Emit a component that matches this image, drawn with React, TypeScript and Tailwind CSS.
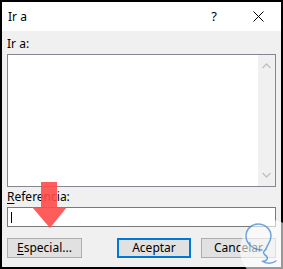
import React from "react";

const font = { fontFamily: '"Segoe UI", "Noto Sans", "Liberation Sans", sans-serif' };

export default function App() {
  return (
    <div className="relative w-[283px] h-[269px] overflow-hidden">
      <div
        className="w-[283px] h-[269px] border-2 border-black bg-[#f0f0f0] flex flex-col text-[12px] text-black"
        style={font}
      >
        {/* title bar */}
        <div className="h-[29px] bg-white flex items-center shrink-0">
          <span className="pl-[6px] leading-none">Ir a</span>
          <span className="ml-auto leading-none text-[13px] mr-[36px]">?</span>
          <svg width="11" height="11" viewBox="0 0 11 11" className="mr-[17px]">
            <path d="M0.5 0.5 L10.5 10.5 M10.5 0.5 L0.5 10.5" stroke="#000" strokeWidth="1" />
          </svg>
        </div>
        {/* body */}
        <div className="flex flex-col pl-[5px] pr-[5px]">
          <div className="h-[16px] mt-[5px] leading-[16px]">Ir a:</div>
          <div className="mt-[2px] h-[133px] w-[269px] border border-[#828790] bg-white flex">
            <div className="flex-1" />
            <div className="w-[17px] bg-[#f0f0f0] flex flex-col items-center justify-between py-[8px]">
              <svg width="9" height="6" viewBox="0 0 9 6">
                <path d="M0.5 5 L4.5 1 L8.5 5" stroke="#c2c2c2" strokeWidth="1.5" fill="none" />
              </svg>
              <svg width="9" height="6" viewBox="0 0 9 6">
                <path d="M0.5 1 L4.5 5 L8.5 1" stroke="#c2c2c2" strokeWidth="1.5" fill="none" />
              </svg>
            </div>
          </div>
          <div className="h-[16px] mt-[2px] leading-[16px]">
            <span className="underline underline-offset-2">R</span>eferencia:
          </div>
          <div className="mt-[2px] h-[20px] w-[269px] border border-[#7a7a7a] bg-white flex items-center">
            <div className="ml-[3px] w-[1px] h-[11px] bg-black" />
          </div>
          <div className="mt-[11px] flex">
            <div className="w-[75px] h-[20px] border border-[#adadad] bg-[#e1e1e1] flex items-center justify-center leading-none">
              <span><span className="underline underline-offset-2">E</span>special...</span>
            </div>
            <div className="ml-[35px] w-[74px] h-[20px] border-2 border-[#0078d7] bg-[#e1e1e1] flex items-center justify-center leading-none">
              Aceptar
            </div>
            <div className="ml-[10px] w-[75px] h-[20px] border border-[#adadad] bg-[#e1e1e1] flex items-center justify-center leading-none">
              Cancelar
            </div>
          </div>
        </div>
      </div>
      {/* red arrow overlay */}
      <svg className="absolute left-0 top-0 pointer-events-none" width="283" height="269" viewBox="0 0 283 269">
        <path d="M41 182 H57 V207 H67 L50 228 L32 207 H41 Z" fill="#ff4a4a" fillOpacity="0.9" />
        {/* watermark logo */}
        <circle cx="270" cy="250" r="30" fill="#ffffff" fillOpacity="0.6" />
        <path
          d="M262 250 C254 250 246 244 246 236 C246 229 252 224 258 224 C265 224 271 229 271 236 C271 242 267 245 266 249 C264 252 262 252 265 255 C270 258 266 262 262 261 C266 264 272 264 276 261"
          fill="none"
          stroke="#4a8fd6"
          strokeOpacity="0.8"
          strokeWidth="1.5"
          strokeLinecap="round"
        />
      </svg>
    </div>
  );
}
